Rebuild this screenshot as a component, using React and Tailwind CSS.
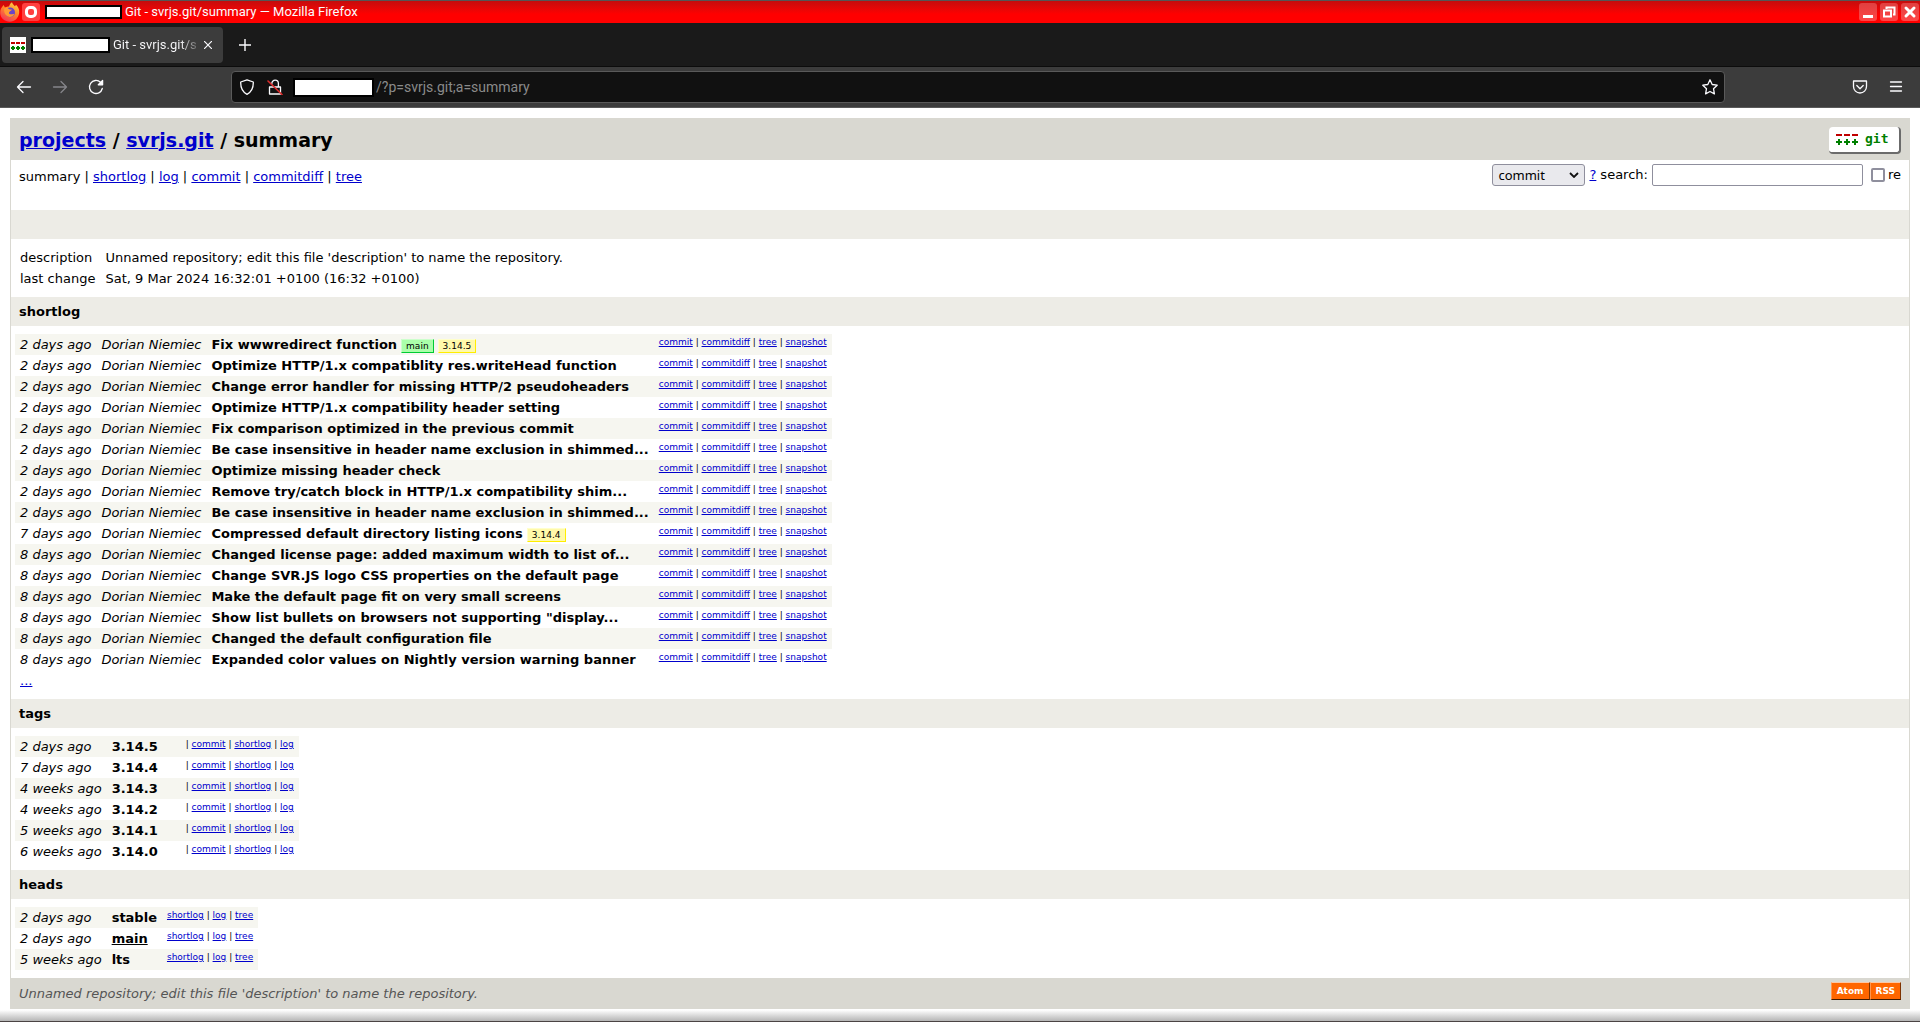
import React from "react";

const LINK = "text-[#0000cc] underline hover:text-[#880000]";

const COMMITS = [
  ["2 days ago", "Fix wwwredirect function", ["main"], ["3.14.5"]],
  ["2 days ago", "Optimize HTTP/1.x compatiblity res.writeHead function"],
  ["2 days ago", "Change error handler for missing HTTP/2 pseudoheaders"],
  ["2 days ago", "Optimize HTTP/1.x compatibility header setting"],
  ["2 days ago", "Fix comparison optimized in the previous commit"],
  ["2 days ago", "Be case insensitive in header name exclusion in shimmed..."],
  ["2 days ago", "Optimize missing header check"],
  ["2 days ago", "Remove try/catch block in HTTP/1.x compatibility shim..."],
  ["2 days ago", "Be case insensitive in header name exclusion in shimmed..."],
  ["7 days ago", "Compressed default directory listing icons", [], ["3.14.4"]],
  ["8 days ago", "Changed license page: added maximum width to list of..."],
  ["8 days ago", "Change SVR.JS logo CSS properties on the default page"],
  ["8 days ago", "Make the default page fit on very small screens"],
  ["8 days ago", "Show list bullets on browsers not supporting \"display..."],
  ["8 days ago", "Changed the default configuration file"],
  ["8 days ago", "Expanded color values on Nightly version warning banner"],
];

const TAGS = [
  ["2 days ago", "3.14.5"],
  ["7 days ago", "3.14.4"],
  ["4 weeks ago", "3.14.3"],
  ["4 weeks ago", "3.14.2"],
  ["5 weeks ago", "3.14.1"],
  ["6 weeks ago", "3.14.0"],
];

const HEADS = [
  ["2 days ago", "stable", false],
  ["2 days ago", "main", true],
  ["5 weeks ago", "lts", false],
];

function Redacted({ className }) {
  return <span className={`shrink-0 border-2 border-black bg-white ${className}`} />;
}

function FirefoxIcon() {
  return (
    <svg viewBox="0 0 20 20" className="size-5 shrink-0" aria-hidden="true">
      <defs>
        <linearGradient id="fox" x1="0.8" y1="0" x2="0.3" y2="1">
          <stop offset="0" stopColor="#ffd54a" />
          <stop offset="0.45" stopColor="#ff8a2a" />
          <stop offset="1" stopColor="#f2335a" />
        </linearGradient>
      </defs>
      <path d="M1 6.500L3.500 3l1.500 2.500C6.500 4.500 8 4.600 9 4.500 9.500 2.500 10.500 1 12 .2c.5 2 2 2.800 3 4l1-1.500c2.400 2 3.500 5 3.200 8-.4 5-4.500 9-9.500 9S.2 16 .2 11c0-1.700.2-3.200.8-4.500z" fill="url(#fox)" />
      <circle cx="10.200" cy="10.400" r="4.800" fill="#6a45c8" />
      <path d="M4.500 6c2-.8 4 0 4.600 1.200.8.300 2 .2 2.800.4-.3 1.200-1.600 1.600-2.600 2.400-.8 1-.2 2 1 2.200 1.500.2 2.500-.6 4-.2-1 2.500-4 3.600-6.500 2.500C4.800 13 3.500 9.500 4.500 6z" fill="#ff9a35" />
    </svg>
  );
}

function TitleButton({ label, children }) {
  return (
    <button type="button" aria-label={label} className="flex size-[18px] items-center justify-center rounded-[3px] bg-gradient-to-b from-[#e04040] to-[#ff4545]">
      <svg viewBox="0 0 16 16" className="size-4" aria-hidden="true">{children}</svg>
    </button>
  );
}

function ToolButton({ label, tone = "text-[#fbfbfe]", className = "", children }) {
  return (
    <button type="button" aria-label={label} className={`flex size-4 shrink-0 items-center justify-center ${tone} ${className}`}>
      <svg viewBox="0 0 16 16" className="size-4" fill="none" stroke="currentColor" strokeWidth="1.300" strokeLinecap="round" strokeLinejoin="round" aria-hidden="true">
        {children}
      </svg>
    </button>
  );
}

function GitFavicon() {
  return (
    <svg viewBox="0 0 16 16" className="size-4 shrink-0" aria-hidden="true">
      <path fill="#fff" d="M0 0h16v16H0z" />
      <path fill="#c00000" d="M1 5h4v2H1zM6 5h4v2H6zM11 5h4v2h-4z" />
      <path fill="#008000" d="M2 9h2v1h1v2H4v1H2v-1H1v-2h1zM7 9h2v1h1v2H9v1H7v-1H6v-2h1zM12 9h2v1h1v2h-1v1h-2v-1h-1v-2h1z" />
    </svg>
  );
}

function GitLogo() {
  return (
    <a href="#git" aria-label="git homepage" className="mt-px flex h-[27px] w-[72px] items-center gap-[7px] rounded-sm border-r-2 border-b-2 border-[#6b6b6b] bg-white pl-[7px]">
      <svg viewBox="0 0 22 11" className="h-[11px] w-[22px]" aria-hidden="true">
        <path fill="#c00000" d="M0 0h6v2H0zM8 0h6v2H8zM16 0h6v2h-6z" />
        <path fill="#008000" d="M2 5h2v2h2v2H4v2H2V9H0V7h2zM10 5h2v2h2v2h-2v2h-2V9H8V7h2zM18 5h2v2h2v2h-2v2h-2V9h-2V7h2z" />
      </svg>
      <span className="font-['DejaVu_Sans_Mono','Liberation_Mono',monospace] text-[13px] leading-4 font-bold text-[#008000]">git</span>
    </a>
  );
}

function Links({ items, lead }) {
  return (
    <td className="px-[5px] pt-[2px] align-top text-[9px] leading-[13px]">
      {lead ? "| " : ""}
      {items.map((item, i) => (
        <React.Fragment key={item}>
          {i > 0 ? " | " : ""}
          <a href={`#${item}`} className={LINK}>{item}</a>
        </React.Fragment>
      ))}
    </td>
  );
}

function Section({ title }) {
  return <h2 className="mt-2 mb-2 h-[29px] bg-[#edece6] px-2 text-[13px] leading-[29px] font-bold">{title}</h2>;
}

const CELL = "h-[21px] px-[5px] py-[3px] leading-[15px]";
const STRIPE = "odd:bg-[#f6f6f0]";
const BADGE = "ml-1 border px-1 py-px text-[9px] leading-none";

export default function App() {
  return (
    <div className="flex min-h-screen flex-col bg-white font-['DejaVu_Sans',sans-serif] text-[13px] text-black">
      <header className="font-['Roboto',sans-serif] text-[13px] text-[#fbfbfe]">
        <div className="flex h-[23px] items-center border-t border-[#555] bg-gradient-to-b from-[#c40c0c] via-[#ff0000] via-60% to-[#ff0000] pr-px">
          <FirefoxIcon />
          <button type="button" aria-label="Pin window" className="ml-[2px] flex size-[18px] items-center justify-center rounded-[3px] bg-[#ff4040]">
            <span className="size-3 rounded-[5px] border-[3px] border-white" />
          </button>
          <Redacted className="ml-[5px] h-[14px] w-[77px]" />
          <span className="ml-[3px] grow leading-5">Git - svrjs.git/summary — Mozilla Firefox</span>
          <div className="flex gap-[3px]">
            <TitleButton label="Minimize"><path d="M3 11h10v3H3z" fill="#fff" /></TitleButton>
            <TitleButton label="Restore">
              <path d="M5.500 5V3.500h8v7H12" fill="none" stroke="#fff" strokeWidth="2" />
              <path d="M3 6.500h7v6H3z" fill="none" stroke="#fff" strokeWidth="2" />
            </TitleButton>
            <TitleButton label="Close"><path d="M4 4l8 8M12 4l-8 8" stroke="#fff" strokeWidth="3" strokeLinecap="round" /></TitleButton>
          </div>
        </div>

        <div className="flex h-11 items-center border-b border-[#0c0c0c] bg-[#1a1a1a] pt-px pl-[2px]">
          <div className="flex h-9 w-[221px] items-center rounded bg-[#3c3c3c] px-2">
            <GitFavicon />
            <Redacted className="ml-[5px] h-4 w-[79px]" />
            <span className="ml-[3px] w-[89px] bg-gradient-to-r from-[#fbfbfe] from-75% to-transparent bg-clip-text whitespace-nowrap text-transparent">Git - svrjs.git/s</span>
            <button type="button" aria-label="Close tab" className="flex h-4 w-3 items-center justify-center">
              <svg viewBox="0 0 8 8" className="size-2" stroke="#fbfbfe" strokeWidth="1.200" aria-hidden="true"><path d="M0 0l8 8M8 0L0 8" /></svg>
            </button>
          </div>
          <button type="button" aria-label="New tab" className="ml-4 flex size-3 items-center justify-center">
            <svg viewBox="0 0 12 12" className="size-3" stroke="#fbfbfe" strokeWidth="1.400" aria-hidden="true"><path d="M6 0v12M0 6h12" /></svg>
          </button>
        </div>

        <div className="flex h-[41px] items-center border-b border-[#5a5a5a] bg-[#3c3c3c] px-4">
          <div className="flex w-[215px] gap-5">
            <ToolButton label="Back"><path d="M14.500 8H1.500M7 2.500L1.500 8 7 13.500" /></ToolButton>
            <ToolButton label="Forward" tone="text-[#85858a]"><path d="M1.500 8h13M9 2.500L14.500 8 9 13.500" /></ToolButton>
            <ToolButton label="Reload"><path d="M14.300 9.500A6.500 6.500 0 1 1 12.500 3.300L14 5" /><path d="M14.600 1.500v4.300h-4.300z" fill="currentColor" /></ToolButton>
          </div>
          <div className="flex h-8 grow items-center rounded border border-[#5a5a5a] bg-[#111] pr-[6px] pl-[7px]">
            <ToolButton label="Tracking protection"><path d="M8 .8L14.300 3c.2 6-1.800 10-6.300 12.300C3.500 13 1.500 9 1.700 3z" /></ToolButton>
            <ToolButton label="Connection not secure" className="ml-3">
              <path d="M2.500 8h11v7h-11zM4.800 5V4.500a3.300 3.300 0 0 1 6.600 0v3.500" />
              <path d="M1 2l14 13.500" stroke="#dc2a2a" strokeWidth="1.600" />
            </ToolButton>
            <Redacted className="ml-[10px] h-[19px] w-[81px]" />
            <input aria-label="Address" defaultValue="/?p=svrjs.git;a=summary" className="ml-[2px] min-w-0 grow bg-transparent text-[14px] text-[#8a8a8a] outline-none" />
            <ToolButton label="Bookmark this page"><path d="M8 .8l2.200 4.700 5 .7-3.700 3.500.9 5.200L8 12.500l-4.400 2.400.9-5.200L.8 6.200l5-.7z" /></ToolButton>
          </div>
          <div className="ml-[127px] flex gap-5">
            <ToolButton label="Save to Pocket"><path d="M1.500 2h13v5.500a6.500 6.500 0 0 1-13 0zM4.800 6.500L8 9.700l3.200-3.200" /></ToolButton>
            <ToolButton label="Menu"><path d="M2.500 3h11M2.500 7.500h11M2.500 12h11" /></ToolButton>
          </div>
        </div>
      </header>

      <main className="m-[10px] mb-0 border border-[#d9d8d1]">
        <div className="flex h-[41px] items-center justify-between bg-[#d9d8d1] px-2">
          <h1 className="text-[19px] leading-6 font-bold">
            <a href="#projects" className={LINK}>projects</a> / <a href="#svrjs" className={LINK}>svrjs.git</a> / summary
          </h1>
          <GitLogo />
        </div>

        <div className="flex h-[50px] items-start justify-between px-2">
          <nav className="py-2 leading-[18px]">
            summary
            {["shortlog", "log", "commit", "commitdiff", "tree"].map((item) => (
              <React.Fragment key={item}>
                {" | "}
                <a href={`#${item}`} className={LINK}>{item}</a>
              </React.Fragment>
            ))}
          </nav>
          <form className="flex items-center pt-1">
            <div className="relative">
              <select aria-label="Search type" className="h-[22px] w-[93px] appearance-none rounded-[3px] border border-[#8f8f9d] bg-[#e9e9ed] pl-[5px] font-['Noto_Sans',sans-serif] text-[13px] leading-4">
                <option>commit</option>
                <option>grep</option>
                <option>author</option>
                <option>committer</option>
                <option>pickaxe</option>
              </select>
              <svg viewBox="0 0 10 6" className="pointer-events-none absolute top-2 right-[6px] h-[6px] w-[10px]" fill="none" stroke="#111" strokeWidth="1.800" aria-hidden="true"><path d="M1 1l4 4 4-4" /></svg>
            </div>
            <a href="#search-help" className={`ml-1 ${LINK}`}>?</a>
            <label htmlFor="search" className="ml-1">search:</label>
            <input id="search" type="text" className="ml-1 h-[22px] w-[211px] rounded-xs border border-[#8f8f9d] bg-white px-1 outline-none" />
            <input id="re" type="checkbox" className="ml-2 size-[14px] appearance-none rounded-xs border-2 border-[#8f8f9d] bg-white checked:bg-[#0060df]" />
            <label htmlFor="re" className="ml-[3px]">re</label>
          </form>
        </div>

        <div className="mb-2 h-[29px] bg-[#edece6]" />

        <table className="ml-1">
          <tbody>
            <tr><td className={CELL}>description</td><td className={CELL}>Unnamed repository; edit this file 'description' to name the repository.</td></tr>
            <tr><td className={CELL}>last change</td><td className={CELL}>Sat, 9 Mar 2024 16:32:01 +0100 (16:32 +0100)</td></tr>
          </tbody>
        </table>

        <Section title="shortlog" />
        <table className="ml-1">
          <tbody>
            {COMMITS.map(([age, subject, heads = [], tags = []], i) => (
              <tr key={i} className={STRIPE}>
                <td className={`${CELL} italic`}>{age}</td>
                <td className={`${CELL} italic`}>Dorian Niemiec</td>
                <td className={CELL}>
                  <a href="#commit" className="font-bold hover:underline">{subject}</a>
                  {heads.map((h) => (
                    <a key={h} href="#head" className={`${BADGE} border-t-[#ccffcc] border-r-[#00cc33] border-b-[#00cc33] border-l-[#ccffcc] bg-[#aaffaa]`}>{h}</a>
                  ))}
                  {tags.map((t) => (
                    <a key={t} href="#tag" className={`${BADGE} border-t-[#ffffcc] border-r-[#ffee00] border-b-[#ffee00] border-l-[#ffffcc] bg-[#fff9aa]`}>{t}</a>
                  ))}
                </td>
                <Links items={["commit", "commitdiff", "tree", "snapshot"]} />
              </tr>
            ))}
            <tr><td className={CELL}><a href="#more" className={LINK}>...</a></td></tr>
          </tbody>
        </table>

        <Section title="tags" />
        <table className="ml-1">
          <tbody>
            {TAGS.map(([age, name]) => (
              <tr key={name} className={STRIPE}>
                <td className={`${CELL} italic`}>{age}</td>
                <td className={CELL}><a href="#tag" className="font-bold hover:underline">{name}</a></td>
                <td className="w-[18px] min-w-[18px]" />
                <Links lead items={["commit", "shortlog", "log"]} />
              </tr>
            ))}
          </tbody>
        </table>

        <Section title="heads" />
        <table className="ml-1">
          <tbody>
            {HEADS.map(([age, name, current]) => (
              <tr key={name} className={STRIPE}>
                <td className={`${CELL} italic`}>{age}</td>
                <td className={CELL}><a href="#head" className={current ? "font-bold underline" : "font-bold hover:underline"}>{name}</a></td>
                <Links items={["shortlog", "log", "tree"]} />
              </tr>
            ))}
          </tbody>
        </table>

        <footer className="mt-2 flex h-[30px] items-start justify-between bg-[#d9d8d1] px-2">
          <p className="leading-[31px] text-[#555555] italic">Unnamed repository; edit this file 'description' to name the repository.</p>
          <div className="flex pt-1 text-[9px] leading-4 font-bold text-white">
            {["Atom", "RSS"].map((f) => (
              <a key={f} href={`#${f}`} className="border border-t-[#fcc7a5] border-r-[#7d3302] border-b-[#3e1a01] border-l-[#ff954e] bg-[#ff6600] px-[5px]">{f}</a>
            ))}
          </div>
        </footer>
      </main>
      <div className="mt-auto h-3 border-b border-[#4a4444] bg-gradient-to-b from-white to-[#b5b5b5]" />
    </div>
  );
}
